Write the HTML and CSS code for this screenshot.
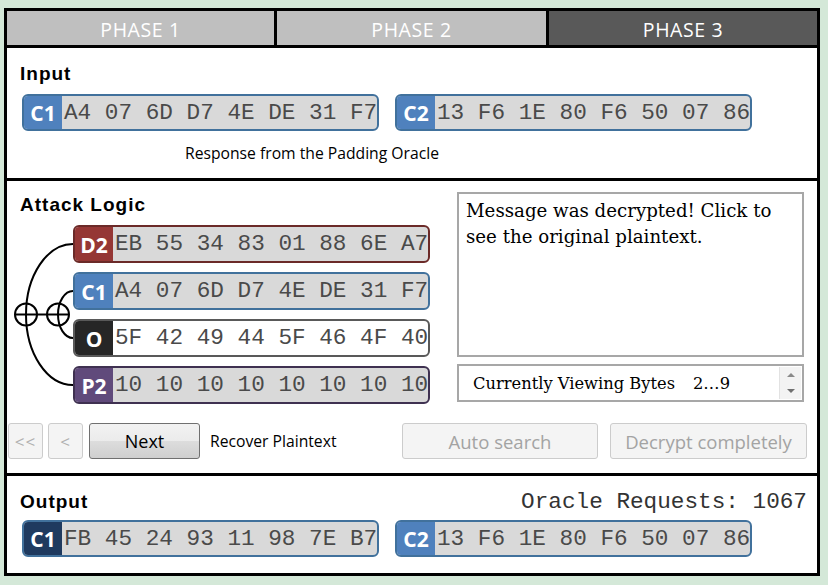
FILE: index.html
```html
<!DOCTYPE html>
<html>
<head>
<meta charset="utf-8">
<link rel="stylesheet" href="styles.css">
</head>
<body>
<div class="frame">
  <div class="tabs">
    <div class="tab">PHASE 1</div>
    <div class="tab">PHASE 2</div>
    <div class="tab active">PHASE 3</div>
  </div>

  <section class="sec sec-input">
    <h2>Input</h2>
    <div class="blocks">
      <div class="bytes c-blue"><span class="lbl">C1</span><span class="hex">A4 07 6D D7 4E DE 31 F7</span></div>
      <div class="bytes c-blue"><span class="lbl">C2</span><span class="hex">13 F6 1E 80 F6 50 07 86</span></div>
    </div>
    <p class="oracle">Response from the Padding Oracle</p>
  </section>

  <section class="sec sec-attack">
    <div class="attack-top">
      <div class="logic">
        <h2 class="pad-h">Attack Logic</h2>
        <div class="diagram">
          <svg class="wires" width="66" height="179" viewBox="0 0 66 179">
            <g fill="none" stroke="#000" stroke-width="2">
              <path d="M66 19 A47 70.5 0 0 0 66 160"/>
              <path d="M66 66 A15 23.5 0 0 0 66 113"/>
              <circle cx="19" cy="89.5" r="11"/>
              <circle cx="51" cy="89.5" r="11"/>
              <line x1="8" y1="89.5" x2="62" y2="89.5"/>
            </g>
          </svg>
          <div class="rows">
            <div class="bytes c-red"><span class="lbl">D2</span><span class="hex">EB 55 34 83 01 88 6E A7</span></div>
            <div class="bytes c-blue"><span class="lbl">C1</span><span class="hex">A4 07 6D D7 4E DE 31 F7</span></div>
            <div class="bytes c-black"><span class="lbl">O</span><span class="hex">5F 42 49 44 5F 46 4F 40</span></div>
            <div class="bytes c-purple"><span class="lbl">P2</span><span class="hex">10 10 10 10 10 10 10 10</span></div>
          </div>
        </div>
      </div>
      <div class="side">
        <div class="msg">Message was decrypted! Click to see the original plaintext.</div>
        <div class="spin">
          <div class="spin-text"><span>Currently Viewing Bytes</span><span class="range">2…9</span></div>
          <div class="spin-btns">
            <span class="arr up"></span>
            <span class="arr down"></span>
          </div>
        </div>
      </div>
    </div>
    <div class="controls">
      <button class="btn small">&lt;&lt;</button>
      <button class="btn small">&lt;</button>
      <button class="btn next">Next</button>
      <span class="ctl-label">Recover Plaintext</span>
      <button class="btn wide auto">Auto search</button>
      <button class="btn wide decrypt">Decrypt completely</button>
    </div>
  </section>

  <section class="sec sec-output">
    <div class="out-head">
      <h2>Output</h2>
      <span class="req">Oracle Requests: 1067</span>
    </div>
    <div class="blocks">
      <div class="bytes c-navy"><span class="lbl">C1</span><span class="hex">FB 45 24 93 11 98 7E B7</span></div>
      <div class="bytes c-blue"><span class="lbl">C2</span><span class="hex">13 F6 1E 80 F6 50 07 86</span></div>
    </div>
  </section>
</div>
</body>
</html>
```

FILE: styles.css
```css
* { box-sizing: border-box; }

body {
  margin: 0;
  background: #d4e8d8;
  font-family: "Open Sans", sans-serif;
}

.frame {
  margin: 8px 0 0 4px;
  width: 816px;
  height: 568px;
  border: 3px solid #000;
  background: #fff;
  display: flex;
  flex-direction: column;
}

/* tabs */
.tabs {
  display: grid;
  grid-template-columns: 267px 269px 268px;
  column-gap: 3px;
  background: #000;
  border-bottom: 3px solid #000;
  height: 37px;
}
.tab {
  background: #bfbfbf;
  color: #fff;
  font-size: 19.5px;
  letter-spacing: 0.6px;
  display: flex;
  align-items: center;
  justify-content: center;
  padding-top: 2px;
}
.tab.active { background: #595959; }

/* sections */
.sec { border-bottom: 3px solid #000; }
.sec:last-child { border-bottom: 0; flex: 1; }

h2 {
  margin: 0;
  font: bold 19px/22px "Liberation Sans", Arial, sans-serif;
  letter-spacing: 1px;
  color: #000;
}

.sec-input {
  height: 133px;
  padding: 15px 0 0 13px;
}

.blocks {
  display: flex;
  gap: 16px;
  margin: 9px 0 0 2px;
}

.bytes {
  display: flex;
  width: 357px;
  height: 37px;
  border: 2px solid #3f6fa6;
  border-radius: 6px;
  overflow: hidden;
  background: #d9d9d9;
}
.lbl {
  width: 38px;
  flex: none;
  color: #fff;
  font: bold 21px/1 "Open Sans", sans-serif;
  display: flex;
  align-items: center;
  justify-content: center;
  padding-top: 2px;
}
.hex {
  font-family: "Liberation Mono", "Courier New", monospace;
  font-size: 22.7px;
  line-height: 34px;
  color: #4a4a4a;
  padding-left: 2px;
  white-space: pre;
}

.c-blue { border-color: #41719c; }
.c-blue .lbl { background: #4f81bd; }
.c-red { border-color: #6b2a28; }
.c-red .lbl { background: #953735; }
.c-black { border-color: #595959; background: #fff; }
.c-black .lbl { background: #262626; }
.c-purple { border-color: #3f3151; }
.c-purple .lbl { background: #604a7b; }
.c-navy { border-color: #41719c; }
.c-navy .lbl { background: #1f3a5f; }

.oracle {
  margin: 12px 0 0 165px;
  font-size: 15.7px;
  line-height: 20px;
  color: #000;
}

/* attack logic */
.sec-attack {
  height: 295px;
}
.attack-top {
  display: flex;
}
.logic {
  width: 423px;
  padding-top: 13px;
}
.pad-h { padding-left: 13px; }
.diagram {
  display: flex;
  margin-top: 9px;
}
.wires {
  flex: none;
  overflow: visible;
}
.rows {
  display: flex;
  flex-direction: column;
  gap: 9px;
}
.rows .bytes { height: 38px; }
.rows .hex { line-height: 35px; }

.side {
  margin-left: 27px;
  width: 347px;
  padding-top: 11px;
}
.msg {
  height: 165px;
  border: 2px solid #a7a7a7;
  padding: 4px 7px;
  font-family: "DejaVu Serif", serif;
  font-size: 18.2px;
  line-height: 26px;
  color: #000;
}
.spin {
  margin-top: 7px;
  height: 38px;
  border: 2px solid #a7a7a7;
  display: flex;
}
.spin-text {
  flex: 1;
  display: flex;
  align-items: center;
  padding-left: 14px;
  font-family: "DejaVu Serif", serif;
  font-size: 16.3px;
  color: #000;
}
.range { margin-left: 18px; }
.spin-btns {
  width: 22px;
  margin: 1px 1px 1px 0;
  display: flex;
  flex-direction: column;
  background: #f3f3f3;
  border-left: 1px solid #e2e2e2;
}
.arr {
  flex: 1;
  display: flex;
  align-items: center;
  justify-content: center;
}
.arr::before {
  content: "";
  border-left: 4px solid transparent;
  border-right: 4px solid transparent;
}
.arr.up::before { border-bottom: 4px solid #8a8a8a; }
.arr.down::before { border-top: 4px solid #707070; }

/* controls */
.controls {
  display: flex;
  align-items: center;
  height: 36px;
  margin: 19px 0 0 1px;
}
.btn {
  height: 36px;
  border: 1px solid #cccccc;
  border-radius: 3px;
  background: #f4f4f4;
  color: #a3a3a3;
  font-family: "Open Sans", sans-serif;
  font-size: 18.5px;
  display: flex;
  align-items: center;
  justify-content: center;
  padding: 0;
}
.btn.small {
  width: 35px;
  font-size: 17px;
  letter-spacing: 1px;
  margin-right: 5px;
  color: #b0b0b0;
}
.btn.next {
  width: 111px;
  margin-left: 1px;
  color: #000;
  font-size: 18px;
  border-color: #707070;
  background: linear-gradient(#f2f2f2, #ebebeb 50%, #dddddd 50%, #cfcfcf);
}
.ctl-label {
  margin-left: 10px;
  font-size: 15.7px;
  color: #000;
}
.btn.wide { width: 196px; }
.btn.auto { margin-left: auto; }
.btn.decrypt { margin-left: 12px; margin-right: 10px; width: 197px; }

/* output */
.sec-output {
  padding: 15px 0 0 13px;
}
.out-head {
  display: flex;
  justify-content: space-between;
  align-items: baseline;
  height: 22px;
  padding-right: 10px;
}
.req {
  font-family: "Liberation Mono", "Courier New", monospace;
  font-size: 22.7px;
  line-height: 22px;
  color: #333;
}
.sec-output .blocks { margin-top: 7px; }
```
